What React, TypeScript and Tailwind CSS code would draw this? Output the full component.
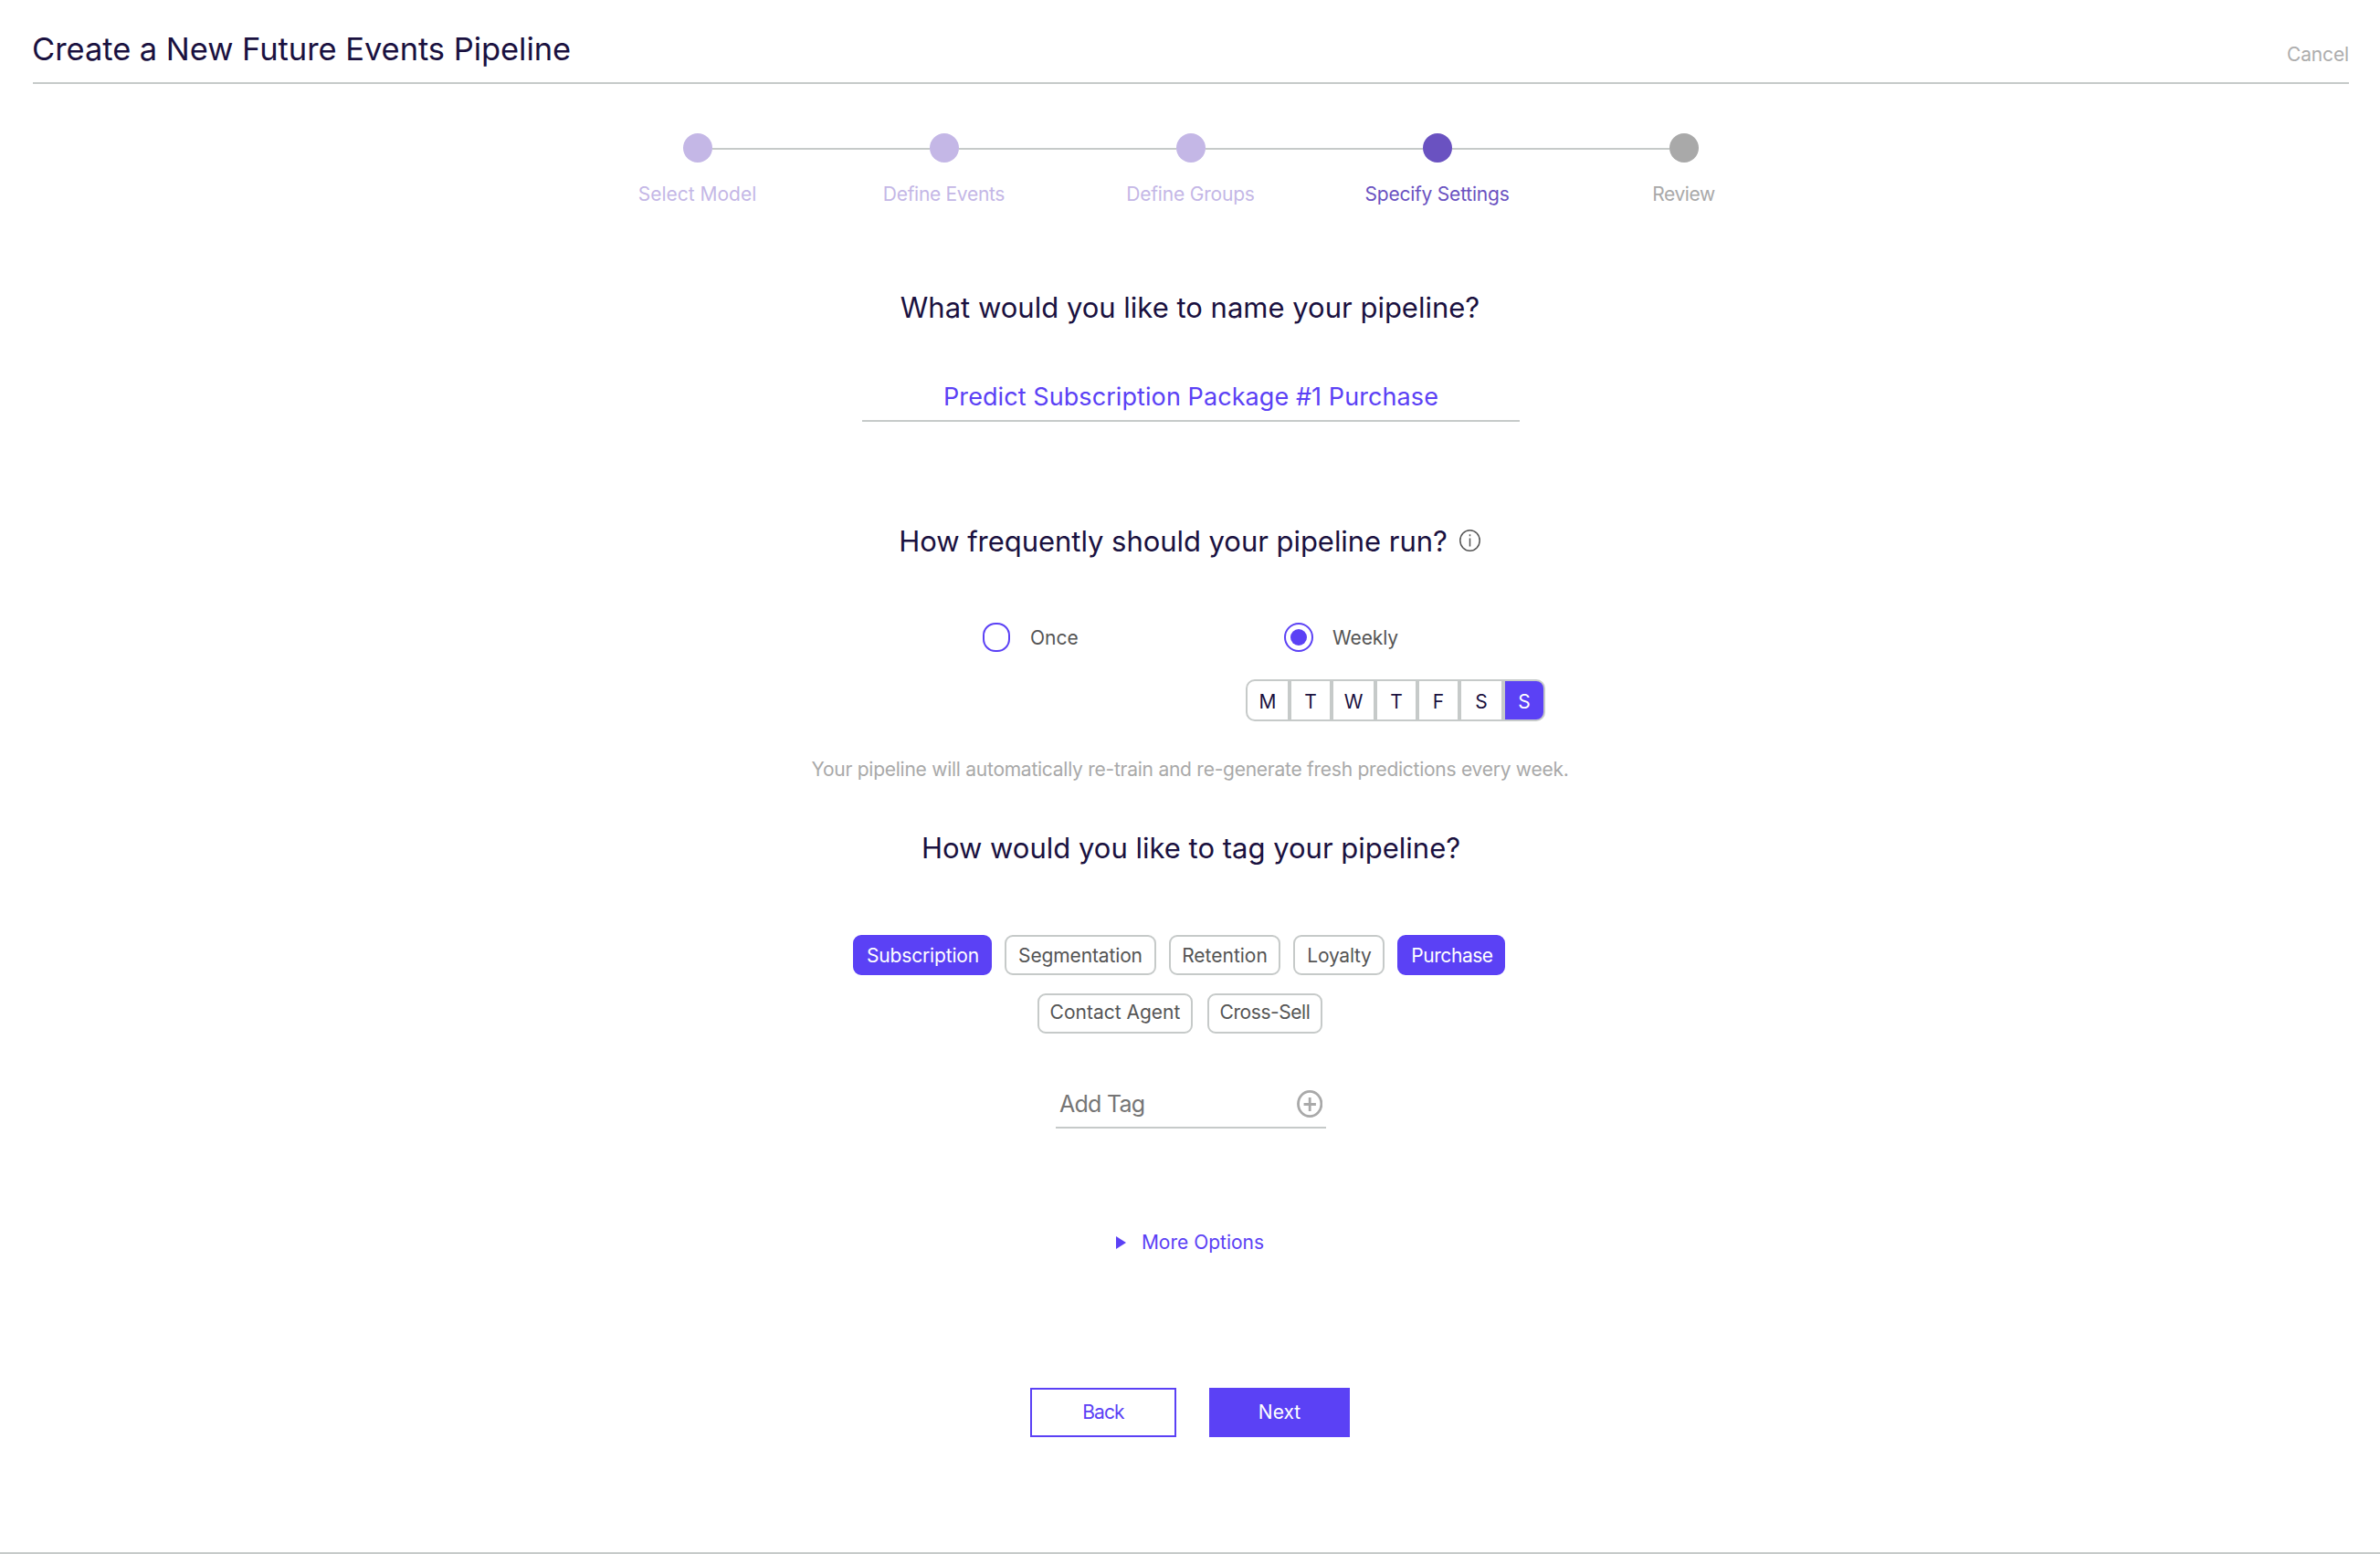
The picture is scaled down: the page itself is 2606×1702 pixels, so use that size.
import React from 'react';

const steps = [
  { label: 'Select Model', dot: 'bg-[#c4b7e6]', text: 'text-[#c4b7e6]' },
  { label: 'Define Events', dot: 'bg-[#c4b7e6]', text: 'text-[#c4b7e6] tracking-[-0.3px]' },
  { label: 'Define Groups', dot: 'bg-[#c4b7e6]', text: 'text-[#c4b7e6] tracking-[-0.2px]' },
  { label: 'Specify Settings', dot: 'bg-[#6a52c1]', text: 'text-[#6a52c1] tracking-[-0.22px]' },
  { label: 'Review', dot: 'bg-[#a9a9a9]', text: 'text-[#a9a9a9] tracking-[-0.4px]' },
];

const days = [
  { label: 'M', size: 'w-12 rounded-l-[10px]' },
  { label: 'T', size: 'w-[46px]' },
  { label: 'W', size: 'w-12' },
  { label: 'T', size: 'w-[46px]' },
  { label: 'F', size: 'w-[46px]' },
  { label: 'S', size: 'w-12' },
  { label: 'S', size: 'w-[46px] rounded-r-[10px]', selected: true },
];

const tags = [
  { label: 'Subscription', size: 'w-[152px] pt-0.5 pl-px tracking-[-0.15px]', selected: true },
  { label: 'Segmentation', size: 'w-[166px] pt-0.5 tracking-[-0.13px]' },
  { label: 'Retention', size: 'w-[122px] pt-0.5' },
  { label: 'Loyalty', size: 'w-[100px] pt-0.5 pl-px tracking-[-0.25px]' },
  { label: 'Purchase', size: 'w-[118px] pt-0.5 pl-0.5 tracking-[-0.45px]', selected: true },
];

const moreTags = [
  { label: 'Contact Agent', size: 'w-[170px] pb-[3px]' },
  { label: 'Cross-Sell', size: 'w-[126px] pb-[3px] tracking-[-0.44px]' },
];

const Question = ({ children }: { children: React.ReactNode }) => (
  <h2 className="text-[31px] leading-10 text-[#1a1140]">{children}</h2>
);

const Tag = ({ label, size, selected }: { label: string; size: string; selected?: boolean }) => (
  <button
    className={`flex h-11 items-center justify-center whitespace-nowrap rounded-[9px] border-2 ${size} ${
      selected ? 'border-[#5b41f5] bg-[#5b41f5] text-white' : 'border-[#c6cac9] text-[#555555]'
    }`}
  >
    {label}
  </button>
);

const App = () => {
  return (
    <div className="flex h-[1702px] w-[2606px] flex-col items-center border-b-2 border-[#c6cac9] bg-white font-['Inter',sans-serif] text-[21px] leading-8">
      <header className="ml-9 mr-[34px] flex h-[92px] items-baseline justify-between self-stretch border-b-2 border-[#c6cac9] pt-[34px]">
        <h1 className="-ml-px text-[34.5px] leading-10 tracking-[-0.05px] text-[#1a1140]">
          Create a New Future Events Pipeline
        </h1>
        <button className="translate-y-px tracking-[-0.15px] text-[#adadad]">Cancel</button>
      </header>

      {/* Stepper */}
      <div className="mt-[54px] flex w-[1112px] translate-x-px items-center">
        {steps.map((step, index) => (
          <React.Fragment key={step.label}>
            {index > 0 && <div className="mt-0.5 h-0.5 flex-1 bg-[#c6cac9]"></div>}
            <div className={`h-8 w-8 rounded-full ${step.dot}`}></div>
          </React.Fragment>
        ))}
      </div>
      <div className="mt-[19px] grid w-[1351px] grid-cols-5 pl-px text-center">
        {steps.map((step) => (
          <span key={step.label} className={step.text}>{step.label}</span>
        ))}
      </div>

      {/* Name */}
      <div className="mt-[88px]">
        <Question>What would you like to name your pipeline?</Question>
      </div>
      <div className="mt-[59px] h-[46px] w-[720px] translate-x-px border-b-2 border-[#c6cac9] pt-px text-center text-[27px] leading-9 tracking-[0.08px] text-[#5b41f5]">
        Predict Subscription Package #1 Purchase
      </div>

      {/* Frequency */}
      <div className="mt-[111px] flex items-center gap-[13px] pr-px tracking-[-0.04px]">
        <Question>How frequently should your pipeline run?</Question>
        <svg className="mb-0.5 h-6 w-[23px]" viewBox="0 0 23 24" fill="none" stroke="#555555" strokeWidth="1.5">
          <ellipse cx="11.5" cy="12" rx="10.7" ry="11.2" />
          <path d="M11.5 9.5v9M11.5 5.2v2" />
        </svg>
      </div>
      <div className="ml-[1076px] mt-[69px] flex self-start text-[#555555]">
        <div className="flex h-8 w-72 items-center gap-[22px]">
          <span className="h-8 w-[30px] rounded-[14px] border-2 border-[#5b41f5]"></span>
          <span className="pt-0.5">Once</span>
        </div>
        <div>
          <div className="flex h-8 items-center gap-[21px] pl-[42px]">
            <span className="flex h-8 w-8 items-center justify-center rounded-full border-2 border-[#5b41f5]">
              <span className="h-[18px] w-[18px] rounded-full bg-[#5b41f5]"></span>
            </span>
            <span className="pt-0.5 tracking-[-0.1px]">Weekly</span>
          </div>
          <div className="mt-[30px] flex">
            {days.map((day, index) => (
              <button
                key={index}
                className={`flex h-[46px] items-center justify-center border-2 border-[#c6cac9] pt-[3px] ${day.size} ${
                  day.selected ? 'bg-[#5b41f5] text-white' : 'text-[#1a1140]'
                }`}
              >
                {day.label}
              </button>
            ))}
          </div>
        </div>
      </div>
      <p className="mt-[37px] tracking-[-0.255px] text-[#a9a9a9]">
        Your pipeline will automatically re-train and re-generate fresh predictions every week.
      </p>

      {/* Tags */}
      <div className="mt-[50px] translate-x-px">
        <Question>How would you like to tag your pipeline?</Question>
      </div>
      <div className="mt-[75px] flex gap-3.5 pr-6">
        {tags.map((tag) => (
          <Tag key={tag.label} {...tag} />
        ))}
      </div>
      <div className="mt-5 flex gap-4 pr-[22px]">
        {moreTags.map((tag) => (
          <Tag key={tag.label} {...tag} />
        ))}
      </div>
      <div className="mt-[58px] flex h-[46px] w-[296px] translate-x-px justify-between border-b-2 border-[#c6cac9] px-1">
        <span className="pt-px text-[25px] leading-9 tracking-[-0.75px] text-[#757575]">Add Tag</span>
        <svg className="mt-1 h-[30px] w-7" viewBox="0 0 28 30" fill="none" stroke="#a9a9a9" strokeWidth="2.8">
          <ellipse cx="14.2" cy="15" rx="12.7" ry="13.6" />
          <path d="M14.2 8v15M7.6 15.5h13.3" />
        </svg>
      </div>

      <button className="mt-[109px] flex items-center gap-[17px] text-[#5b41f5]">
        <svg className="h-3.5 w-[11px]" viewBox="0 0 11 14" fill="#5b41f5">
          <path d="M0 0l11 7-11 7z" />
        </svg>
        More Options
      </button>

      <div className="mt-[143px] flex gap-9">
        <button className="h-[54px] w-40 border-2 border-[#5b41f5] tracking-[-0.9px] text-[#5b41f5]">Back</button>
        <button className="h-[54px] w-[154px] bg-[#5b41f5] text-white">Next</button>
      </div>
    </div>
  );
};

export default App;
